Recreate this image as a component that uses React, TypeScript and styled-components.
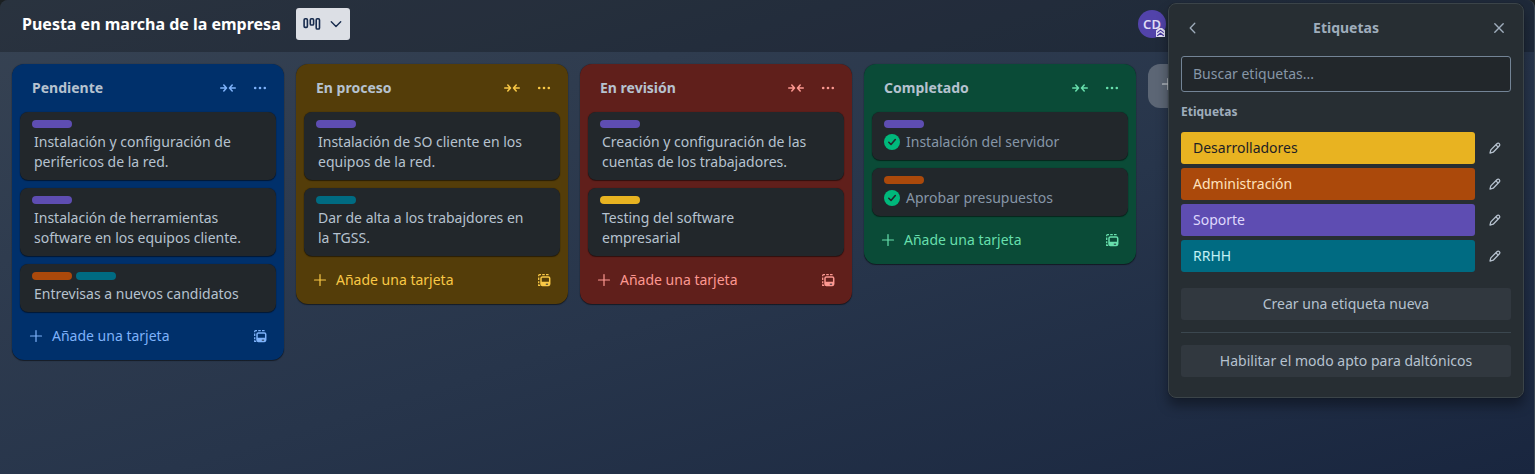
import React from "react";
import styled, { createGlobalStyle } from "styled-components";

const GlobalStyle = createGlobalStyle`
  *, *::before, *::after { box-sizing: border-box; }
  body { margin: 0; background: #1b2022; overflow: hidden; }
  button, input { font: inherit; }
`;

const palette = {
  purple: "#5e4db2",
  teal: "#006b82",
  orange: "#ab490b",
  yellow: "#e8b321",
};
type LabelColor = keyof typeof palette;

const Board = styled.div`
  position: relative;
  width: 1535px;
  height: 474px;
  border-radius: 8px 8px 0 0;
  border-right: 1px solid #3b4753;
  overflow: hidden;
  background: linear-gradient(to bottom right, #374353 0%, #27354b 55%, #19263f 100%);
  color: #b6c2cf;
  font: 14px/20px "Noto Sans", "Liberation Sans", sans-serif;
`;

const TopBar = styled.header`
  display: flex;
  align-items: center;
  height: 52px;
  padding: 4px 0 8px 22px;
  background: rgba(0, 0, 0, 0.24);
`;

const BoardTitle = styled.h1`
  margin: 0;
  width: 274px;
  color: #fff;
  font-size: 16px;
  line-height: 32px;
  font-weight: 700;
  white-space: nowrap;
`;

const ViewSwitch = styled.button`
  display: flex;
  align-items: center;
  justify-content: space-between;
  width: 54px;
  height: 32px;
  padding: 0 6px;
  border: 0;
  border-radius: 3px;
  background: #dcdfe5;
  color: #172b4d;
`;

const Avatar = styled.div`
  position: relative;
  display: grid;
  place-items: center;
  width: 28px;
  height: 28px;
  margin-left: 788px;
  border-radius: 50%;
  background: #5243aa;
  color: #dfdcf5;
  font-size: 13px;
  font-weight: 600;
`;

const AdminBadge = styled.svg`
  position: absolute;
  right: 1px;
  bottom: 1px;
`;

const Lists = styled.main`
  display: flex;
  align-items: flex-start;
  gap: 12px;
  padding: 12px;
`;

const ListBox = styled.section<{ $bg: string; $accent: string }>`
  display: flex;
  flex-direction: column;
  flex: none;
  width: 272px;
  padding: 8px;
  border-radius: 12px;
  background: ${(p) => p.$bg};
  color: ${(p) => p.$accent};
  box-shadow: 0 1px 1px rgba(3, 4, 4, 0.5), 0 0 1px rgba(3, 4, 4, 0.5);
`;

const ListHeader = styled.header`
  display: flex;
  align-items: center;
  height: 32px;
  margin-bottom: 8px;
  padding: 0 8px 0 12px;
`;

const ListTitle = styled.h2`
  flex: 1;
  margin: 0;
  color: #b6c2cf;
  font-size: 14px;
  line-height: 20px;
  font-weight: 700;
`;

const HeaderIcons = styled.div`
  display: flex;
  gap: 16px;
`;

const Cards = styled.div`
  display: flex;
  flex-direction: column;
  gap: 8px;
`;

const Card = styled.article`
  padding: 8px 12px;
  border-radius: 8px;
  background: #22272b;
  box-shadow: 0 1px 1px rgba(3, 4, 4, 0.5), 0 0 1px rgba(3, 4, 4, 0.5);
`;

const CardLabels = styled.div`
  display: flex;
  gap: 4px;
  margin-bottom: 4px;
`;

const CardLabel = styled.span<{ $color: LabelColor }>`
  width: 40px;
  height: 8px;
  border-radius: 4px;
  background: ${(p) => palette[p.$color]};
`;

const CardText = styled.div<{ $done?: boolean }>`
  display: flex;
  align-items: center;
  gap: 6px;
  padding-left: ${(p) => (p.$done ? 0 : 2)}px;
  color: ${(p) => (p.$done ? "#8696a7" : "#b6c2cf")};
  white-space: pre-line;
`;

const ListFooter = styled.footer`
  display: flex;
  align-items: center;
  gap: 8px;
  height: 32px;
  margin-top: 8px;
  padding: 0 8px;
`;

const AddText = styled.span`
  flex: 1;
`;

const AddList = styled.button`
  flex: none;
  width: 272px;
  height: 44px;
  padding: 0 12px;
  border: 0;
  border-radius: 12px;
  background: #5c6675;
  color: #dcdfe4;
  text-align: left;
`;

const Popover = styled.aside`
  position: absolute;
  top: 3px;
  left: 1168px;
  width: 356px;
  height: 395px;
  padding: 0 12px;
  border: 1px solid #3b4449;
  border-radius: 8px;
  background: #272e33;
  box-shadow: 0 8px 12px rgba(3, 4, 4, 0.36), 0 0 1px rgba(3, 4, 4, 0.5);
`;

const PopHeader = styled.header`
  display: flex;
  align-items: center;
  justify-content: space-between;
  height: 48px;
  padding: 0 4px;
  color: #9fadbc;
`;

const PopTitle = styled.h2`
  margin: 0;
  font-size: 14px;
  line-height: 20px;
  font-weight: 700;
`;

const Search = styled.input`
  display: block;
  width: 100%;
  height: 36px;
  margin-top: 4px;
  padding: 0 11px 2px;
  border: 1px solid #738496;
  border-radius: 3px;
  background: #22272b;
  color: #b6c2cf;
  outline: 0;
  &::placeholder { color: #8696a7; opacity: 1; }
`;

const SectionTitle = styled.h3`
  margin: 12px 0;
  color: #9fadbc;
  font-size: 12px;
  line-height: 16px;
  font-weight: 700;
`;

const LabelList = styled.div`
  display: flex;
  flex-direction: column;
  gap: 4px;
`;

const LabelRow = styled.div`
  display: flex;
  align-items: center;
  gap: 12px;
`;

const LabelChip = styled.div<{ $color: LabelColor; $text: string }>`
  width: 294px;
  height: 32px;
  padding: 6px 12px;
  border-radius: 3px;
  background: ${(p) => palette[p.$color]};
  color: ${(p) => p.$text};
`;

const PopButton = styled.button`
  display: block;
  width: 100%;
  height: 32px;
  padding: 0;
  border: 0;
  border-radius: 3px;
  background: #31383f;
  color: #b6c2cf;
`;

const Actions = styled.div`
  padding-top: 16px;
`;

const Divider = styled.hr`
  height: 1px;
  margin: 12px 0;
  border: 0;
  background: #3b474f;
`;

const Collapse = () => (
  <svg width="16" height="16" viewBox="0 0 16 16" fill="none" stroke="currentColor" strokeWidth="1.5" strokeLinecap="round" strokeLinejoin="round">
    <path d="M.7 8h5.6M3.8 5l2.7 3-2.7 3M15.3 8H9.7M12.2 5 9.500 8l2.7 3" />
  </svg>
);

const Dots = () => (
  <svg width="16" height="16" viewBox="0 0 16 16" fill="currentColor">
    <circle cx="3.200" cy="8" r="1.300" />
    <circle cx="8" cy="8" r="1.300" />
    <circle cx="12.800" cy="8" r="1.300" />
  </svg>
);

const Plus = () => (
  <svg width="16" height="16" viewBox="0 0 16 16" fill="none" stroke="currentColor" strokeWidth="1.2" strokeLinecap="round">
    <path d="M8 2.500v11M2.500 8h11" />
  </svg>
);

const Template = () => (
  <svg width="16" height="16" viewBox="0 0 16 16" fill="none" stroke="currentColor" strokeWidth="1.3">
    <path d="M2.700 4.200V3.500q0-.9.900-.9H5M6.200 2.600h2.600M10 2.600h2.600M2.700 5.500v2.600M2.700 9.300v2M2.700 12.300v1.100h1.500" />
    <rect x="5" y="5" width="8.700" height="8.400" rx="1.300" strokeWidth="1.500" />
    <path d="M5 10.600h8.700v1.900q0 .9-.9.900H6q-1 0-1-.9Z" fill="currentColor" stroke="none" />
    <path d="M5 10.400h8.700" />
    <path d="M9.800 12.200h2.300" stroke="#222f3d" strokeWidth="1" />
  </svg>
);

const Done = () => (
  <svg width="16" height="16" viewBox="0 0 16 16">
    <circle cx="8" cy="8" r="8" fill="#00b87b" />
    <path d="m4.800 8.300 2.200 2.200 4.300-5" fill="none" stroke="#22272b" strokeWidth="1.600" strokeLinecap="round" strokeLinejoin="round" />
  </svg>
);

const BoardIcon = () => (
  <svg width="20" height="16" viewBox="0 0 20 16" fill="none" stroke="currentColor" strokeWidth="1.600">
    <rect x="2.100" y="2.800" width="3.300" height="8.600" rx="1.100" />
    <rect x="8.300" y="2.800" width="3.300" height="6.200" rx="1.100" />
    <rect x="14.200" y="2.800" width="3.300" height="10.200" rx="1.100" />
  </svg>
);

const Chevron = () => (
  <svg width="16" height="16" viewBox="0 0 16 16" fill="none" stroke="currentColor" strokeWidth="1.400" strokeLinecap="round" strokeLinejoin="round">
    <path d="m3.300 5.700 4.700 4.700 4.700-4.700" />
  </svg>
);

const Back = () => (
  <svg width="16" height="16" viewBox="0 0 16 16" fill="none" stroke="currentColor" strokeWidth="1.300" strokeLinecap="round" strokeLinejoin="round">
    <path d="M9.800 3.200 5.200 8l4.600 4.800" />
  </svg>
);

const Close = () => (
  <svg width="16" height="16" viewBox="0 0 16 16" fill="none" stroke="currentColor" strokeWidth="1.400" strokeLinecap="round">
    <path d="m3.800 3.800 8.400 8.400m0-8.400-8.400 8.400" />
  </svg>
);

const Pencil = () => (
  <svg width="16" height="16" viewBox="0 0 16 16" fill="none" stroke="currentColor" strokeWidth="1.300" strokeLinejoin="round">
    <path d="M3 13.100 3.800 9.900l6.100-6.100c.9-.9 1.700-.9 2.400-.2s.7 1.600-.1 2.400L6.200 12.200Z" />
    <path d="m8.900 4.800 2.300 2.300" />
  </svg>
);

interface CardData {
  text: string;
  labels: LabelColor[];
  done?: boolean;
}

interface ListData {
  title: string;
  bg: string;
  accent: string;
  cards: CardData[];
}

const lists: ListData[] = [
  {
    title: "Pendiente",
    bg: "#00306b",
    accent: "#7eb2fa",
    cards: [
      { text: "Instalación y configuración de\nperifericos de la red.", labels: ["purple"] },
      { text: "Instalación de herramientas\nsoftware en los equipos cliente.", labels: ["purple"] },
      { text: "Entrevisas a nuevos candidatos", labels: ["orange", "teal"] },
    ],
  },
  {
    title: "En proceso",
    bg: "#543d09",
    accent: "#f9c846",
    cards: [
      { text: "Instalación de SO cliente en los\nequipos de la red.", labels: ["purple"] },
      { text: "Dar de alta a los trabajdores en\nla TGSS.", labels: ["teal"] },
    ],
  },
  {
    title: "En revisión",
    bg: "#601f1b",
    accent: "#fd9891",
    cards: [
      { text: "Creación y configuración de las\ncuentas de los trabajadores.", labels: ["purple"] },
      { text: "Testing del software\nempresarial", labels: ["yellow"] },
    ],
  },
  {
    title: "Completado",
    bg: "#0a4b37",
    accent: "#67dfac",
    cards: [
      { text: "Instalación del servidor", labels: ["purple"], done: true },
      { text: "Aprobar presupuestos", labels: ["orange"], done: true },
    ],
  },
];

const labels: { name: string; color: LabelColor; text: string }[] = [
  { name: "Desarrolladores", color: "yellow", text: "#1d2125" },
  { name: "Administración", color: "orange", text: "#ffe2bd" },
  { name: "Soporte", color: "purple", text: "#dfd8fd" },
  { name: "RRHH", color: "teal", text: "#c1f0f5" },
];

const List = ({ title, bg, accent, cards }: ListData) => (
  <ListBox $bg={bg} $accent={accent}>
    <ListHeader>
      <ListTitle>{title}</ListTitle>
      <HeaderIcons>
        <Collapse />
        <Dots />
      </HeaderIcons>
    </ListHeader>
    <Cards>
      {cards.map((card) => (
        <Card key={card.text}>
          <CardLabels>
            {card.labels.map((c) => (
              <CardLabel key={c} $color={c} />
            ))}
          </CardLabels>
          <CardText $done={card.done}>
            {card.done && <Done />}
            {card.text}
          </CardText>
        </Card>
      ))}
    </Cards>
    <ListFooter>
      <Plus />
      <AddText>Añade una tarjeta</AddText>
      <Template />
    </ListFooter>
  </ListBox>
);

export default function App() {
  return (
    <Board>
      <GlobalStyle />
      <TopBar>
        <BoardTitle>Puesta en marcha de la empresa</BoardTitle>
        <ViewSwitch aria-label="Vista">
          <BoardIcon />
          <Chevron />
        </ViewSwitch>
        <Avatar>
          CD
          <AdminBadge width="9" height="9" viewBox="0 0 9 9">
            <path d="M0 2.500 3 0h3l3 2.500V9H0Z" fill="#e4e2f5" />
            <path d="m1.200 4.600 3.300-2.500 3.300 2.500M1.200 7.700l3.300-2.500 3.300 2.500" fill="none" stroke="#4536a0" strokeWidth="1.100" />
          </AdminBadge>
        </Avatar>
      </TopBar>
      <Lists>
        {lists.map((list) => (
          <List key={list.title} {...list} />
        ))}
        <AddList aria-label="Lista nueva">
          <Plus />
        </AddList>
      </Lists>
      <Popover>
        <PopHeader>
          <Back />
          <PopTitle>Etiquetas</PopTitle>
          <Close />
        </PopHeader>
        <Search placeholder="Buscar etiquetas..." />
        <SectionTitle>Etiquetas</SectionTitle>
        <LabelList>
          {labels.map((l) => (
            <LabelRow key={l.name}>
              <LabelChip $color={l.color} $text={l.text}>{l.name}</LabelChip>
              <Pencil />
            </LabelRow>
          ))}
        </LabelList>
        <Actions>
          <PopButton>Crear una etiqueta nueva</PopButton>
          <Divider />
          <PopButton>Habilitar el modo apto para daltónicos</PopButton>
        </Actions>
      </Popover>
    </Board>
  );
}
